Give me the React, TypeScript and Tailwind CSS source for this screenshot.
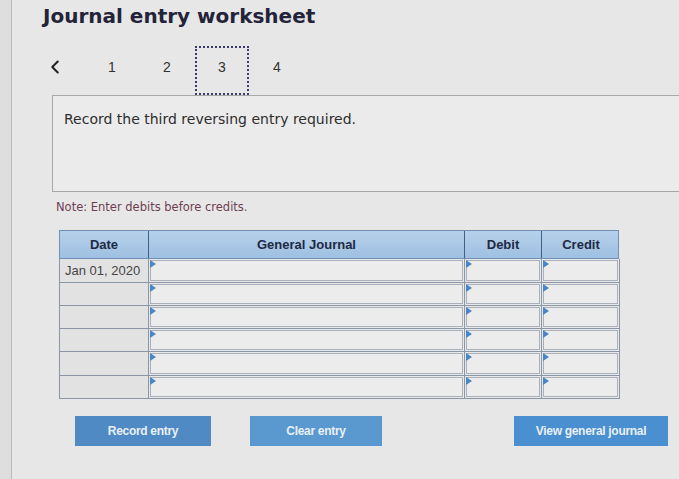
import { ChevronLeft } from "lucide-react";

const rows = ["Jan 01, 2020", "", "", "", "", ""];

function Flag() {
  return (
    <span className="absolute left-[1px] top-[1px] h-0 w-0 border-y-[4px] border-l-[6px] border-y-transparent border-l-[#4a86c5]" />
  );
}

function InputCell() {
  return (
    <div className="relative border-b border-r border-[#8a96a6] bg-[#e9e9e9] p-[1px]">
      <Flag />
      <div className="h-full w-full border border-[#a9b0ba] bg-[#ececec]" />
    </div>
  );
}

export default function App() {
  return (
    <div
      className="flex h-[479px] w-[679px] overflow-hidden bg-[#e7e7e7] text-[#222]"
      style={{ fontFamily: '"Liberation Sans", Arial, sans-serif' }}
    >
      <div className="w-[12px] shrink-0 border-r border-[#b9b9b9] bg-[#dedede]" />
      <div className="flex flex-1 flex-col">
        <h1
          className="ml-[31px] mt-[3px] h-[26px] text-[20px] font-bold leading-[26px] text-[#23233a]"
          style={{ fontFamily: '"DejaVu Sans", Verdana, sans-serif' }}
        >
          Journal entry worksheet
        </h1>
        <div className="ml-[40px] mt-[17px] flex h-[49px] items-center pb-[7px] text-[14px] text-[#333]">
          <ChevronLeft className="ml-[-8px] h-[22px] w-[22px] text-[#222]" strokeWidth={2.2} />
          <span className="ml-[41px] w-[10px] text-center">1</span>
          <span className="ml-[45px] w-[10px] text-center">2</span>
          <span className="ml-[23px] mb-[-7px] flex h-[49px] w-[54px] items-center justify-center border-2 border-dotted border-[#3a3a6a] pb-[7px]">
            3
          </span>
          <span className="ml-[23px] w-[10px] text-center">4</span>
        </div>
        <div className="ml-[40px] h-[97px] border border-r-0 border-[#a8a8a8] bg-[#ebebeb] px-[11px] pt-[13px]">
          <p
            className="text-[14px] text-[#2e2e2e]"
            style={{ fontFamily: '"DejaVu Sans", Verdana, sans-serif' }}
          >
            Record the third reversing entry required.
          </p>
        </div>
        <p
          className="ml-[44px] mt-[7px] text-[11.5px] text-[#6e3f52]"
          style={{ fontFamily: '"DejaVu Sans", Verdana, sans-serif' }}
        >
          Note: Enter debits before credits.
        </p>
        <div className="ml-[47px] mt-[14px] w-[560px]">
          <div className="grid h-[29px] grid-cols-[89px_316px_77px_78px] border border-[#6f8fb3] bg-gradient-to-b from-[#b6d0ea] to-[#9fc0e2] text-[13px] font-bold text-[#1d2a44]">
            <div className="flex items-center justify-center border-r border-[#3e5f86]">Date</div>
            <div className="flex items-center justify-center border-r border-[#3e5f86]">General Journal</div>
            <div className="flex items-center justify-center border-r border-[#3e5f86]">Debit</div>
            <div className="flex items-center justify-center">Credit</div>
          </div>
          <div className="border-l border-[#8a96a6]">
            {rows.map((d, i) => (
              <div key={i} className="grid h-[23.3px] grid-cols-[89px_316px_77px_78px]">
                <div className="flex items-center border-b border-r border-[#8a96a6] bg-[#e2e2e2] px-[5px] text-[13px] text-[#444]">
                  {d}
                </div>
                <InputCell />
                <InputCell />
                <InputCell />
              </div>
            ))}
          </div>
        </div>
        <div className="ml-[63px] mt-[17px] flex h-[30px] items-stretch text-[12px] font-bold tracking-[-0.3px] text-[#e9eff6]">
          <button className="w-[136px] bg-[#4f8ac4]">Record entry</button>
          <button className="ml-[39px] w-[132px] bg-[#5a98d0]">Clear entry</button>
          <button className="ml-[132px] w-[154px] bg-[#4a90d0]">View general journal</button>
        </div>
      </div>
    </div>
  );
}
